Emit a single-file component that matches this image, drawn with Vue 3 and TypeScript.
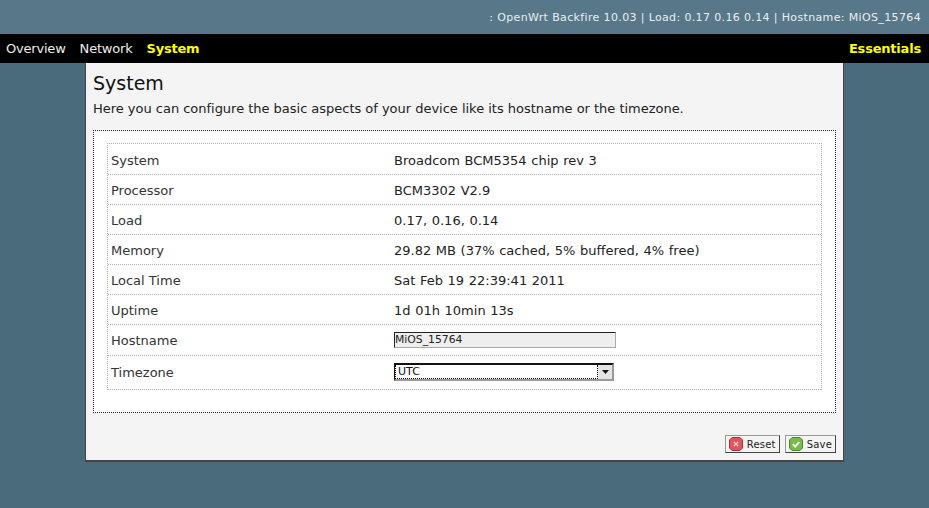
<script setup lang="ts">
const rows: [string, string][] = [
  ['System', 'Broadcom BCM5354 chip rev 3'],
  ['Processor', 'BCM3302 V2.9'],
  ['Load', '0.17, 0.16, 0.14'],
  ['Memory', '29.82 MB (37% cached, 5% buffered, 4% free)'],
  ['Local Time', 'Sat Feb 19 22:39:41 2011'],
  ['Uptime', '1d 01h 10min 13s'],
]
</script>

<template>
  <div class="page">
    <header class="top">: OpenWrt Backfire 10.03 | Load: 0.17 0.16 0.14 | Hostname: MiOS_15764</header>
    <nav class="nav">
      <a>Overview</a>
      <a>Network</a>
      <a class="on">System</a>
      <a class="on right">Essentials</a>
    </nav>
    <main class="box">
      <h1>System</h1>
      <p class="desc">Here you can configure the basic aspects of your device like its hostname or the timezone.</p>
      <section class="field">
        <div class="table">
          <div v-for="r in rows" :key="r[0]" class="row">
            <div class="k">{{ r[0] }}</div>
            <div class="v">{{ r[1] }}</div>
          </div>
          <div class="row host">
            <div class="k">Hostname</div>
            <div class="v"><div class="input">MiOS_15764</div></div>
          </div>
          <div class="row tz">
            <div class="k">Timezone</div>
            <div class="v">
              <div class="select">
                <span class="sel-text">UTC</span>
                <span class="sel-btn"><svg width="7" height="4" viewBox="0 0 7 4"><path d="M0 0h7L3.500 4z" fill="#111" /></svg></span>
              </div>
            </div>
          </div>
        </div>
      </section>
      <div class="actions">
        <button class="btn">
          <svg width="14" height="14" viewBox="0 0 14 14">
            <path d="M3 .5h8L13.500 3v8L11 13.500H3L.5 11V3z" fill="#e2555e" stroke="#a8323c" />
            <path d="M4.800 4.800l4.400 4.400M9.200 4.800l-4.400 4.400" stroke="#fbdede" stroke-width="1.200" />
          </svg>
          Reset
        </button>
        <button class="btn">
          <svg width="14" height="14" viewBox="0 0 14 14">
            <path d="M3 .5h8L13.500 3v8L11 13.500H3L.5 11V3z" fill="#78bb4a" stroke="#4d8a2c" />
            <path d="M3.800 7.200l2.400 2.400 4-4.600" fill="none" stroke="#fff" stroke-width="1.800" />
          </svg>
          Save
        </button>
      </div>
    </main>
  </div>
</template>

<style>
html, body { margin: 0; background: #4a6b7c; }
</style>

<style scoped>
.page {
  height: 508px;
  overflow: hidden;
  background: #4a6b7c;
  font-family: "DejaVu Sans", Verdana, sans-serif;
  font-size: 13px;
  color: #222;
}
.top {
  height: 34px;
  box-sizing: border-box;
  padding: 11px 8px 0 0;
  text-align: right;
  font-size: 11px;
  letter-spacing: .36px;
  line-height: 14px;
  color: #e8edf0;
  background: #587889;
}
.nav {
  height: 29px;
  background: #000;
  display: flex;
  gap: 14px;
  padding: 0 8px 0 6px;
  align-items: center;
  color: #eee;
  line-height: 29px;
  letter-spacing: -.2px;
}
.nav .on { color: #ff0; font-weight: bold; }
.nav .right { margin-left: auto; }
.box {
  width: 759px;
  height: 399px;
  margin-left: 85px;
  box-sizing: border-box;
  background: #f4f4f4;
  border-left: 1px solid #444;
  border-right: 1px solid #444;
  border-bottom: 2px solid #444;
  padding: 0 7px;
  display: flex;
  flex-direction: column;
}
h1 {
  margin: 8px 0 0;
  font-size: 19px;
  font-weight: normal;
  line-height: 24px;
  color: #111;
}
.desc { margin: 6px 0 0; line-height: 16px; color: #222; letter-spacing: -.02px; }
.field {
  margin-top: 13px;
  height: 283px;
  box-sizing: border-box;
  background: #fff;
  border: 1px dotted #222;
  padding: 12px 13px;
}
.table { border: 1px dotted #b0b0b0; border-bottom: 0; }
.row {
  display: flex;
  height: 30px;
  box-sizing: border-box;
  border-bottom: 1px dotted #b0b0b0;
  align-items: center;
  padding-top: 1px;
}
.row:first-child { height: 31px; padding-top: 2px; }
.row.host { height: 31px; padding-top: 0; }
.row.tz { height: 34px; padding-top: 0; }
.k { width: 286px; padding-left: 3px; box-sizing: border-box; color: #333; }
.v { flex: 1; color: #222; word-spacing: .5px; }
.input {
  width: 222px;
  height: 16px;
  box-sizing: border-box;
  background: #eee;
  border: 1px solid #aaa;
  border-top-color: #222;
  border-left-color: #222;
  font-size: 10.800px;
  line-height: 14px;
  padding-left: 0;
  color: #222;
}
.select {
  width: 220px;
  height: 18px;
  margin-top: -1px;
  box-sizing: border-box;
  display: flex;
  background: #fff;
  border: 2px solid #999;
  border-top: 2px solid #111;
  border-left: 1px solid #111;
  font-size: 11px;
}
.sel-text {
  flex: 1;
  border: 1px dotted #000;
  border-top: 0;
  padding-left: 2px;
  line-height: 14px;
  color: #111;
}
.sel-btn {
  width: 14px;
  background: #e4e4e4;
  display: flex;
  align-items: center;
  justify-content: center;
}
.actions {
  margin-top: 22px;
  display: flex;
  justify-content: flex-end;
  gap: 5px;
}
.btn {
  height: 18px;
  box-sizing: border-box;
  display: flex;
  align-items: center;
  gap: 4px;
  padding: 0 3px;
  font: 10px "DejaVu Sans", Verdana, sans-serif;
  letter-spacing: .2px;
  color: #222;
  background: #f4f4f4;
  border: 1px solid #999;
  border-right-color: #444;
  border-bottom-color: #444;
}
</style>
